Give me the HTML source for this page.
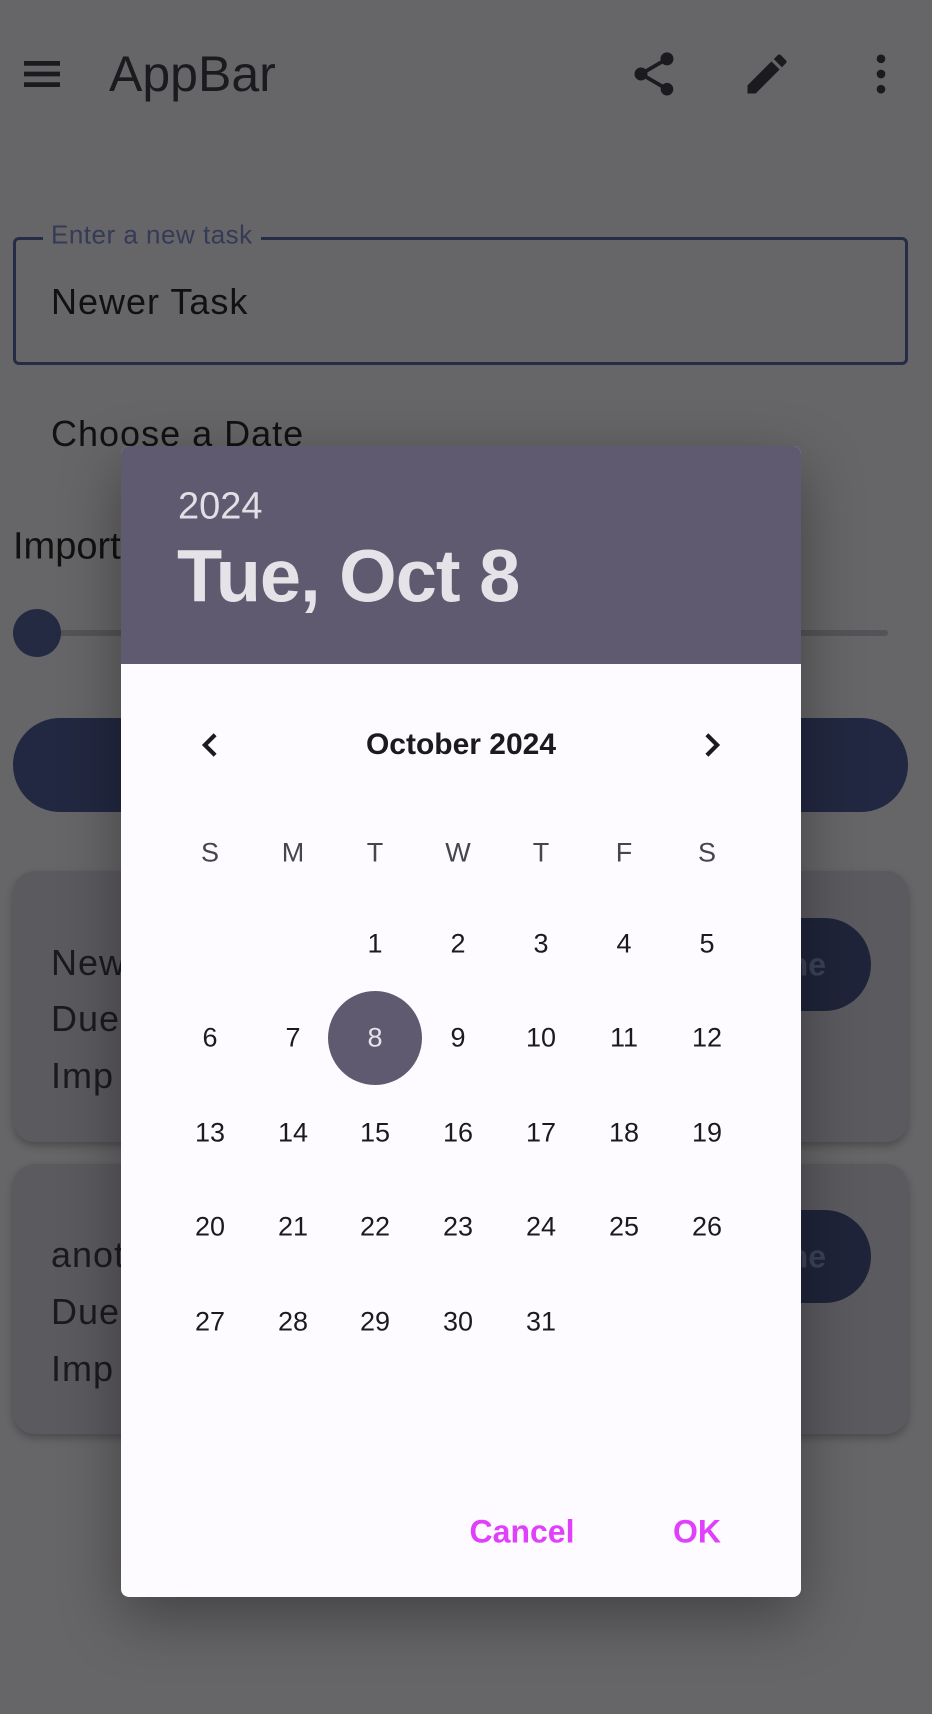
<!DOCTYPE html>
<html><head><meta charset="utf-8"><style>
*{margin:0;padding:0;box-sizing:border-box}
body{width:932px;height:1714px;background:#666567;font-family:"Liberation Sans",sans-serif;position:relative;overflow:hidden;color:#1b1b20}
.a{position:absolute;white-space:nowrap}
.c{position:absolute;transform:translate(-50%,-50%);white-space:nowrap}
.l{position:absolute;transform:translateY(-50%);white-space:nowrap}
</style></head><body>
<svg class="a" style="left:16px;top:50px" width="52" height="48" viewBox="0 0 24 24"><path d="M3 5.5h18v2.4H3zM3 10.8h18v2.4H3zM3 16.1h18v2.4H3z" fill="#1b1b1f"/></svg>
<div class="l" style="left:109px;top:74px;font-size:50px;color:#1b1b1f">AppBar</div>
<svg class="a" style="left:628px;top:48px" width="52" height="52" viewBox="0 0 24 24"><path fill="#1b1b1f" d="M18 16.08c-.76 0-1.440.3-1.96.77L8.910 12.7c.05-.23.09-.46.09-.7s-.04-.47-.09-.7l7.050-4.11c.54.5 1.250.81 2.040.81 1.660 0 3-1.34 3-3s-1.34-3-3-3-3 1.340-3 3c0 .24.04.47.09.7L8.040 9.81C7.500 9.31 6.790 9 6 9c-1.66 0-3 1.340-3 3s1.340 3 3 3c.79 0 1.500-.31 2.040-.81l7.120 4.16c-.05.21-.08.43-.08.65 0 1.610 1.310 2.920 2.920 2.920s2.920-1.31 2.920-2.92-1.31-2.92-2.92-2.92z"/></svg>
<svg class="a" style="left:741px;top:48px" width="52" height="52" viewBox="0 0 24 24"><path fill="#1b1b1f" d="M3 17.25V21h3.75L17.81 9.94l-3.75-3.75L3 17.25zM20.71 7.04a1 1 0 000-1.41l-2.34-2.34a1 1 0 00-1.41 0l-1.83 1.83 3.75 3.75 1.83-1.83z"/></svg>
<svg class="a" style="left:855px;top:48px" width="52" height="52" viewBox="0 0 24 24"><circle cx="12" cy="5" r="2" fill="#1b1b1f"/><circle cx="12" cy="12" r="2" fill="#1b1b1f"/><circle cx="12" cy="19" r="2" fill="#1b1b1f"/></svg>

<div class="a" style="left:13px;top:237px;width:895px;height:128px;border:3px solid #262c45;border-radius:6px"></div>
<div class="l" style="left:43px;top:235px;font-size:26px;color:#353b57;background:#666567;padding:0 8px;letter-spacing:0.5px">Enter a new task</div>
<div class="l" style="left:51px;top:302px;font-size:36px;color:#111;letter-spacing:1px">Newer Task</div>
<div class="l" style="left:51px;top:434px;font-size:36px;color:#111;letter-spacing:1px">Choose a Date</div>
<div class="l" style="left:13px;top:547px;font-size:38px;color:#111">Importance</div>
<div class="a" style="left:40px;top:630px;width:848px;height:6px;background:#545458;border-radius:3px"></div>
<div class="a" style="left:13px;top:609px;width:48px;height:48px;border-radius:50%;background:#232a42"></div>
<div class="a" style="left:13px;top:718px;width:895px;height:94px;border-radius:47px;background:#222841"></div>

<div class="a" style="left:13px;top:871px;width:895px;height:271px;border-radius:22px;background:#5b5a5f;box-shadow:0 4px 8px rgba(0,0,0,.25)"></div>
<div class="a" style="left:700px;top:918px;width:171px;height:93px;border-radius:47px;background:#1f243a"></div>
<div class="c" style="left:786px;top:965px;font-size:32px;font-weight:bold;color:#3d4258">Done</div>
<div class="l" style="left:51px;top:963px;font-size:36px;color:#1b1b1f;letter-spacing:1px">New</div>
<div class="l" style="left:51px;top:1019px;font-size:36px;color:#1b1b1f;letter-spacing:1px">Due</div>
<div class="l" style="left:51px;top:1076px;font-size:36px;color:#1b1b1f;letter-spacing:1px">Imp</div>
<div class="a" style="left:13px;top:1164px;width:895px;height:270px;border-radius:22px;background:#5b5a5f;box-shadow:0 4px 8px rgba(0,0,0,.25)"></div>
<div class="a" style="left:700px;top:1210px;width:171px;height:93px;border-radius:47px;background:#1f243a"></div>
<div class="c" style="left:786px;top:1257px;font-size:32px;font-weight:bold;color:#3d4258">Done</div>
<div class="l" style="left:51px;top:1255px;font-size:36px;color:#1b1b1f;letter-spacing:1px">anot</div>
<div class="l" style="left:51px;top:1312px;font-size:36px;color:#1b1b1f;letter-spacing:1px">Due</div>
<div class="l" style="left:51px;top:1369px;font-size:36px;color:#1b1b1f;letter-spacing:1px">Imp</div>

<div class="a" style="left:121px;top:446px;width:680px;height:1151px;border-radius:8px;background:#fdfbff;box-shadow:0 20px 60px rgba(0,0,0,.35);overflow:hidden">
  <div style="height:218px;background:#5f5a70"></div>
</div>
<div class="l" style="left:178px;top:507px;font-size:38px;color:#e2dfe6">2024</div>
<div class="l" style="left:177px;top:576px;font-size:74px;font-weight:bold;color:#e6e3e8;letter-spacing:-1px">Tue, Oct 8</div>

<svg class="c" style="left:210px;top:745px" width="44" height="44" viewBox="0 0 24 24"><path d="M15.6 7.2L14 5.6 7.6 12l6.4 6.4 1.6-1.6L10.8 12z" fill="#1b1b1f"/></svg>
<svg class="c" style="left:712px;top:745px" width="44" height="44" viewBox="0 0 24 24"><path d="M8.4 16.8L10 18.4l6.4-6.4L10 5.6 8.4 7.2 13.2 12z" fill="#1b1b1f"/></svg>
<div class="c" style="left:461px;top:745px;font-size:30px;font-weight:bold;color:#1b1b1f">October 2024</div>

<div class="c" style="left:375px;top:1038px;width:94px;height:94px;border-radius:50%;background:#5f5a70"></div>

<div class="c" style="left:522px;top:1532px;font-size:32px;font-weight:bold;color:#e040fb">Cancel</div>
<div class="c" style="left:697px;top:1532px;font-size:32px;font-weight:bold;color:#e040fb">OK</div>

<div style="font-size:27px;color:#1b1b1f">
<div class="c" style="left:210px;top:853px;color:#45454c">S</div>
<div class="c" style="left:293px;top:853px;color:#45454c">M</div>
<div class="c" style="left:375px;top:853px;color:#45454c">T</div>
<div class="c" style="left:458px;top:853px;color:#45454c">W</div>
<div class="c" style="left:541px;top:853px;color:#45454c">T</div>
<div class="c" style="left:624px;top:853px;color:#45454c">F</div>
<div class="c" style="left:707px;top:853px;color:#45454c">S</div>

<div class="c" style="left:375px;top:944px">1</div>
<div class="c" style="left:458px;top:944px">2</div>
<div class="c" style="left:541px;top:944px">3</div>
<div class="c" style="left:624px;top:944px">4</div>
<div class="c" style="left:707px;top:944px">5</div>

<div class="c" style="left:210px;top:1038px">6</div>
<div class="c" style="left:293px;top:1038px">7</div>
<div class="c" style="left:375px;top:1038px;color:#e6e3e8">8</div>
<div class="c" style="left:458px;top:1038px">9</div>
<div class="c" style="left:541px;top:1038px">10</div>
<div class="c" style="left:624px;top:1038px">11</div>
<div class="c" style="left:707px;top:1038px">12</div>

<div class="c" style="left:210px;top:1133px">13</div>
<div class="c" style="left:293px;top:1133px">14</div>
<div class="c" style="left:375px;top:1133px">15</div>
<div class="c" style="left:458px;top:1133px">16</div>
<div class="c" style="left:541px;top:1133px">17</div>
<div class="c" style="left:624px;top:1133px">18</div>
<div class="c" style="left:707px;top:1133px">19</div>

<div class="c" style="left:210px;top:1227px">20</div>
<div class="c" style="left:293px;top:1227px">21</div>
<div class="c" style="left:375px;top:1227px">22</div>
<div class="c" style="left:458px;top:1227px">23</div>
<div class="c" style="left:541px;top:1227px">24</div>
<div class="c" style="left:624px;top:1227px">25</div>
<div class="c" style="left:707px;top:1227px">26</div>

<div class="c" style="left:210px;top:1322px">27</div>
<div class="c" style="left:293px;top:1322px">28</div>
<div class="c" style="left:375px;top:1322px">29</div>
<div class="c" style="left:458px;top:1322px">30</div>
<div class="c" style="left:541px;top:1322px">31</div>
</div>
</body></html>
